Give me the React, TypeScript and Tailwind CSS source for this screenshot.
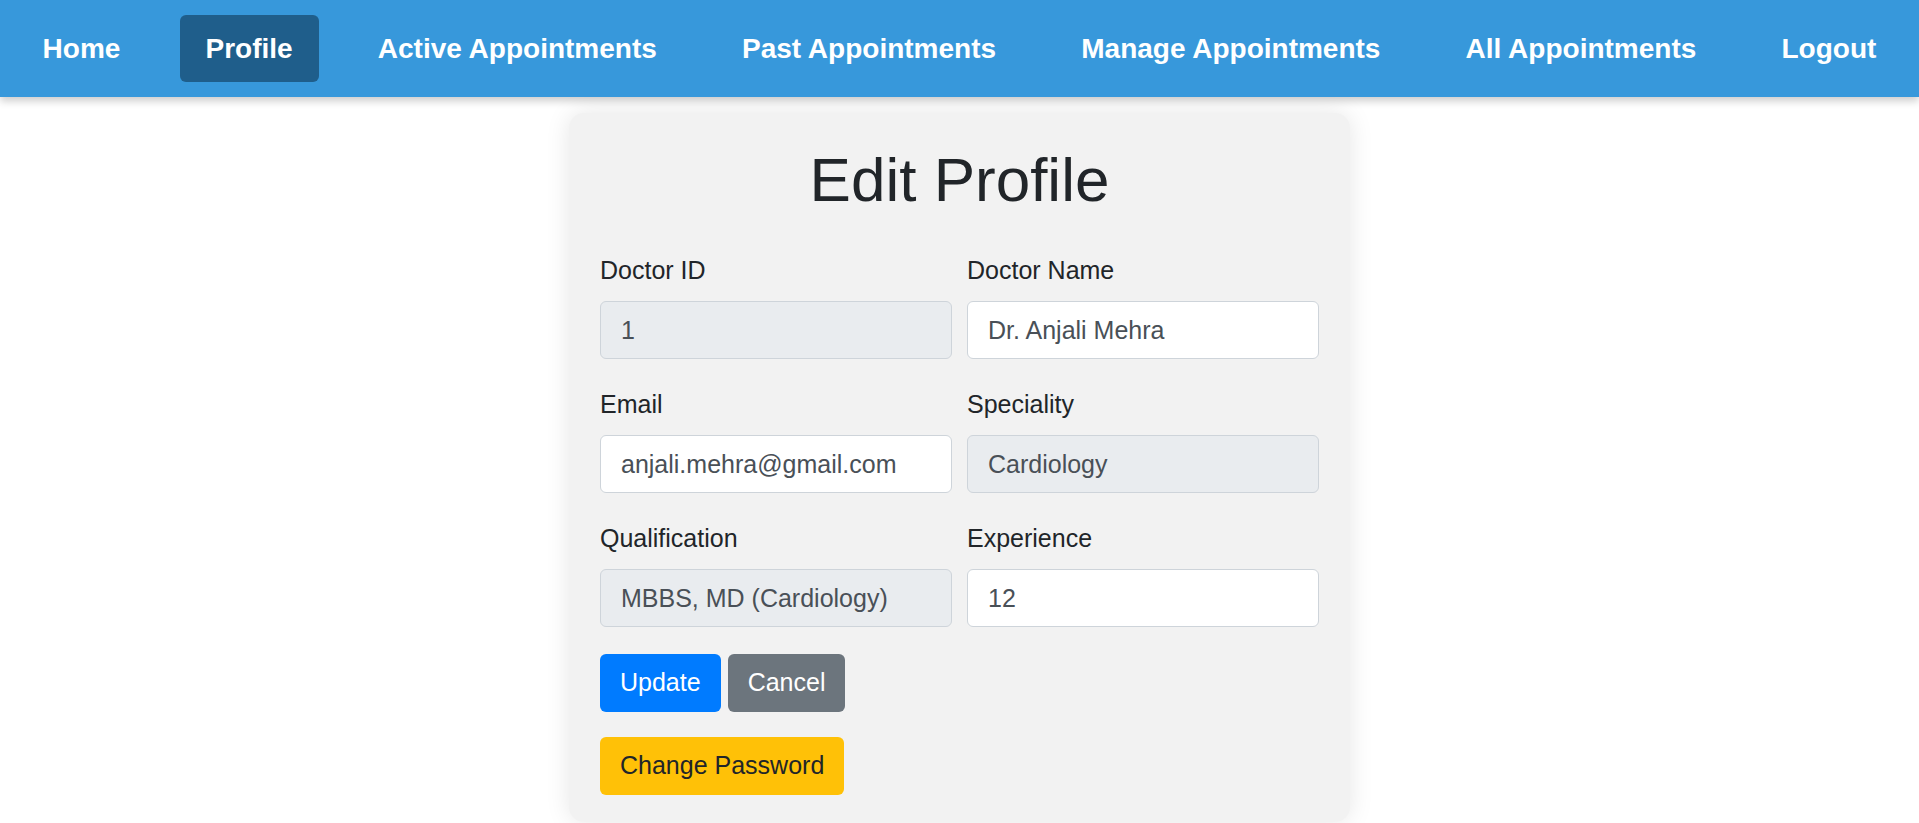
import React from 'react';

const NAV_LINKS = [
  { label: 'Home' },
  { label: 'Profile', active: true },
  { label: 'Active Appointments' },
  { label: 'Past Appointments' },
  { label: 'Manage Appointments' },
  { label: 'All Appointments' },
  { label: 'Logout' },
];

const FIELDS = [
  { label: 'Doctor ID', value: '1', readOnly: true },
  { label: 'Doctor Name', value: 'Dr. Anjali Mehra' },
  { label: 'Email', value: 'anjali.mehra@gmail.com' },
  { label: 'Speciality', value: 'Cardiology', readOnly: true },
  { label: 'Qualification', value: 'MBBS, MD (Cardiology)', readOnly: true },
  { label: 'Experience', value: '12' },
];

function Nav() {
  return (
    <nav className="relative z-10 flex h-[97px] items-center justify-around bg-[#3798db] shadow-[0_4px_8px_rgba(0,0,0,0.2)]">
      {NAV_LINKS.map(({ label, active }) => (
        <a
          key={label}
          href="#"
          className={`rounded-[6px] px-[26px] py-3 text-[28px] leading-[43px] font-bold text-white ${active ? 'bg-[#1f5e8b]' : ''}`}
        >
          {label}
        </a>
      ))}
    </nav>
  );
}

function Field({ label, value, readOnly }: { label: string; value: string; readOnly?: boolean }) {
  return (
    <div className="mb-[27px] flex flex-col">
      <label className="mb-[13px] text-[25px] leading-[36px] text-[#212529]">{label}</label>
      <input
        defaultValue={value}
        readOnly={readOnly}
        className={`h-[58px] w-full rounded-[6px] border-[1.5px] border-[#ced4da] px-[20px] text-[25px] text-[#495057] outline-none ${readOnly ? 'bg-[#e9ecef]' : 'bg-white'}`}
      />
    </div>
  );
}

export default function App() {
  return (
    <div className="min-h-screen bg-white font-['Liberation_Sans',Arial,sans-serif]">
      <Nav />
      <div className="mx-auto mt-4 w-[781px] rounded-[15px] bg-[#f2f2f2] px-[31px] pt-[30px] pb-[27px] shadow-[0_0_24px_rgba(0,0,0,0.1)]">
        <h1 className="mb-[35px] text-center text-[62px] leading-[74px] text-[#212529]">Edit Profile</h1>
        <div className="grid grid-cols-2 gap-x-[15px]">
          {FIELDS.map(f => (
            <Field key={f.label} {...f} />
          ))}
        </div>
        <div className="flex gap-[7px]">
          <button className="h-[58px] rounded-[6px] bg-[#007bff] px-[20px] text-[25px] text-white">Update</button>
          <button className="h-[58px] rounded-[6px] bg-[#6c757d] px-[20px] text-[25px] text-white">Cancel</button>
        </div>
        <button className="mt-[25px] h-[58px] rounded-[6px] bg-[#ffc107] px-[20px] text-[25px] text-[#212529]">
          Change Password
        </button>
      </div>
    </div>
  );
}
